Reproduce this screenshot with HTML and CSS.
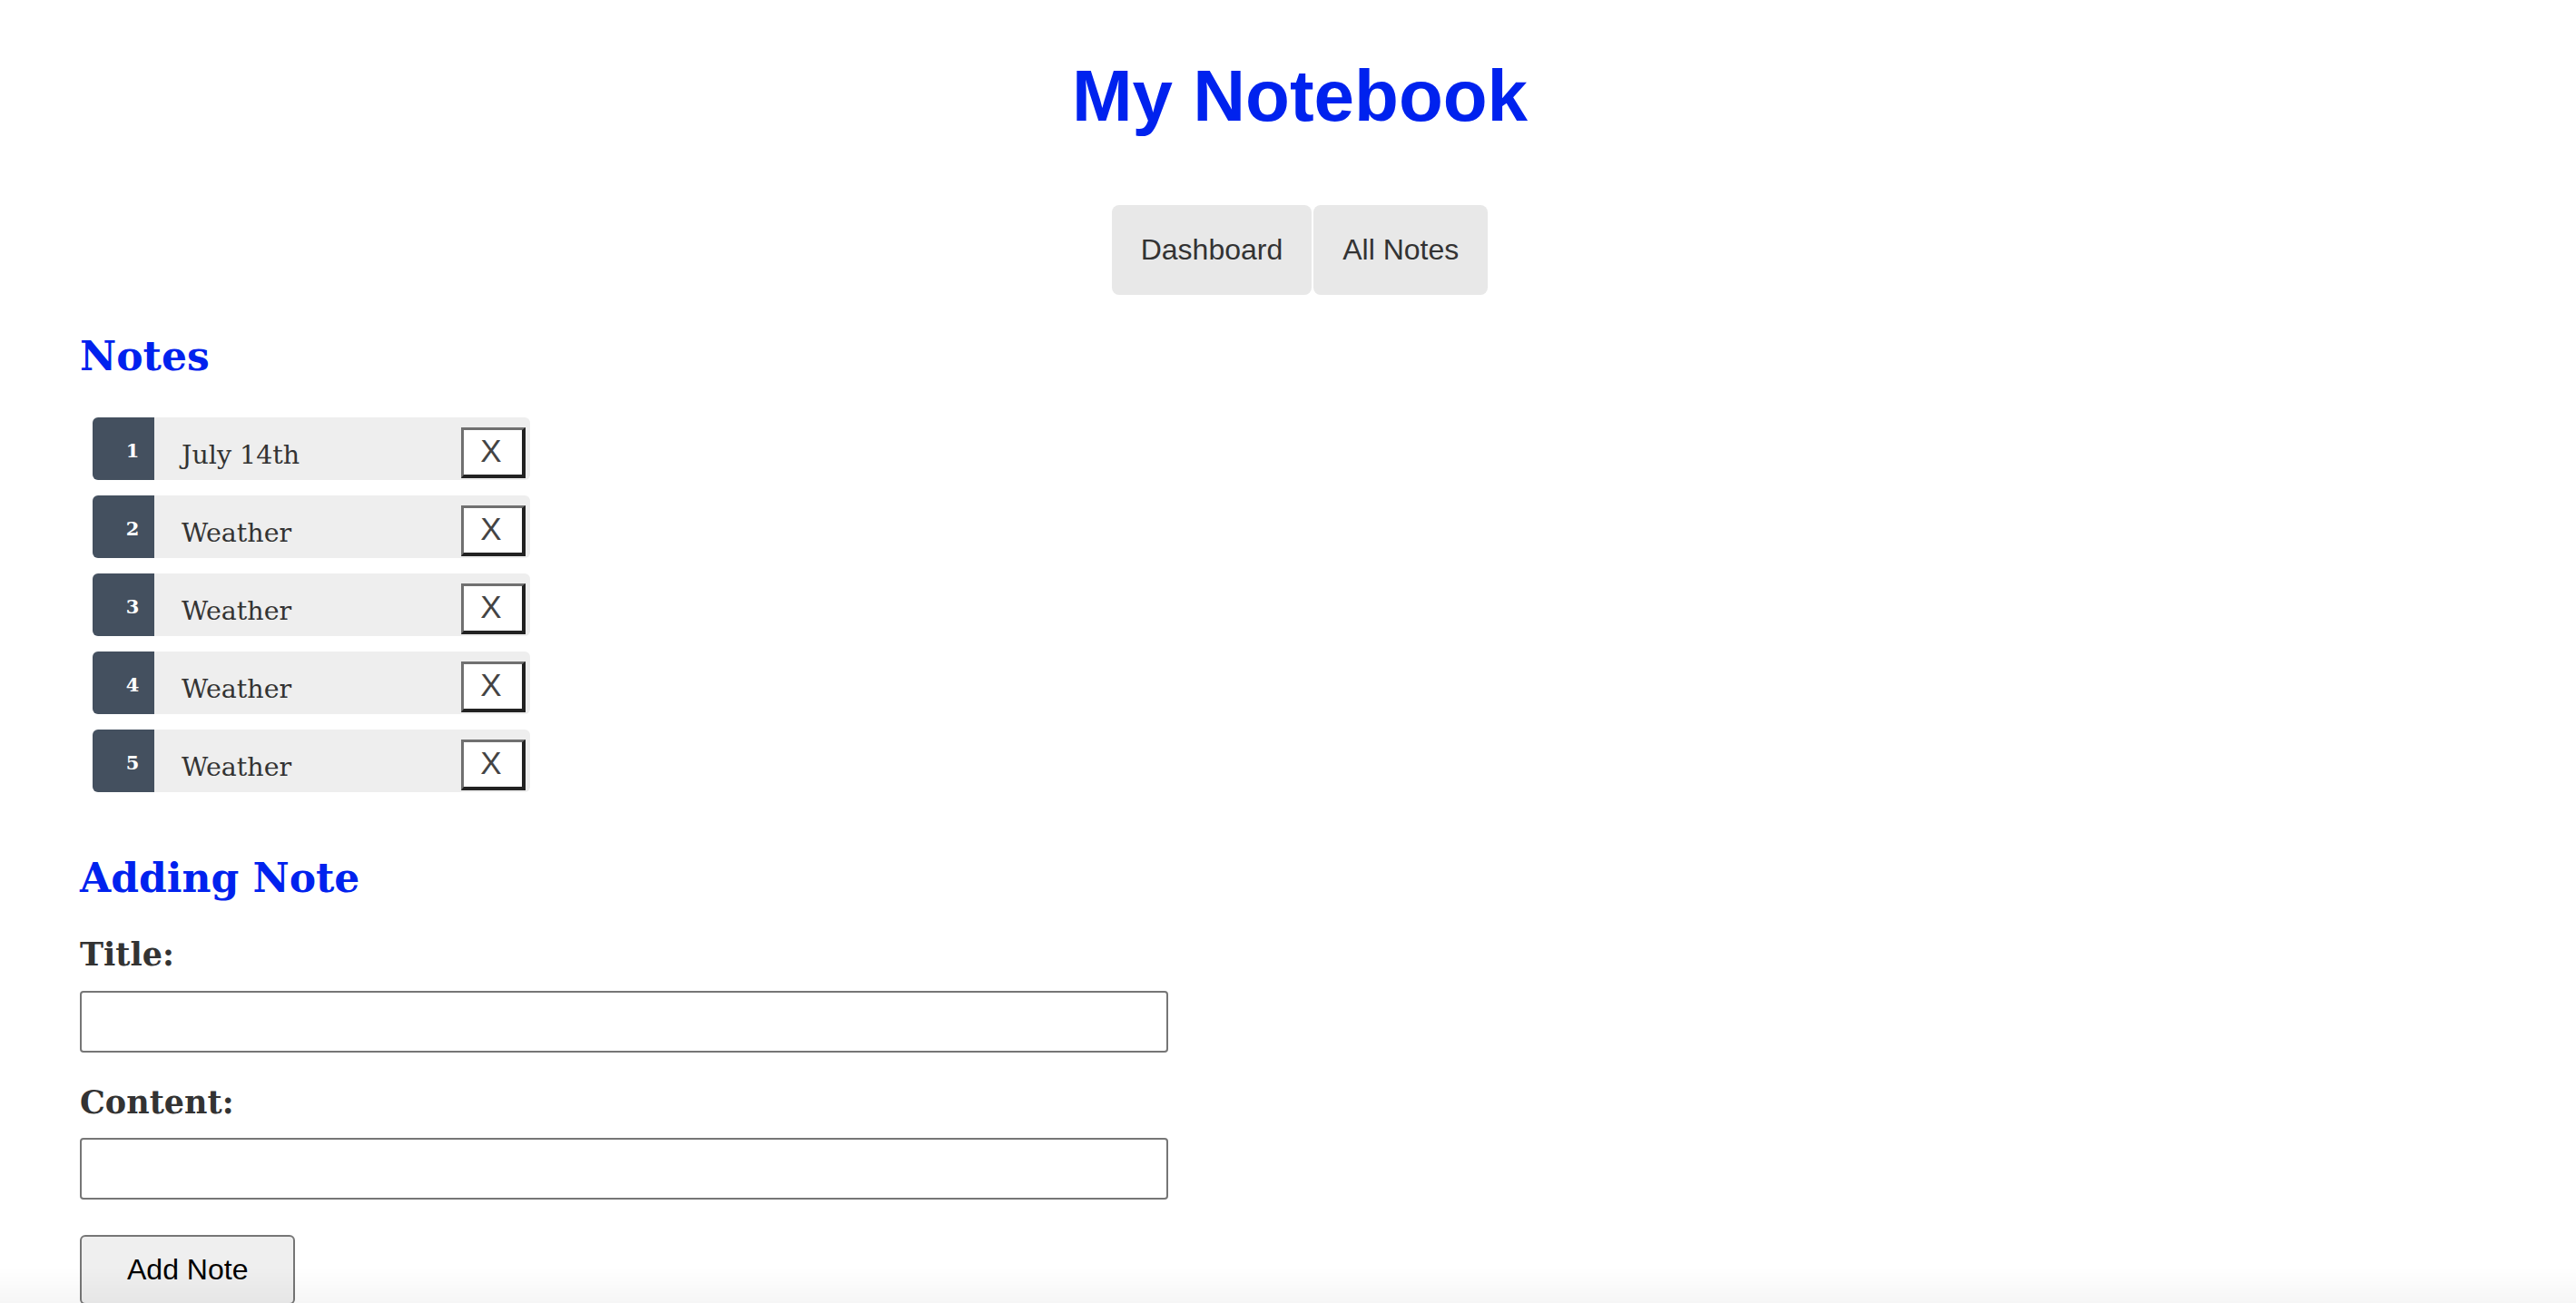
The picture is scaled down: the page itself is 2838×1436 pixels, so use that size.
FILE: index.html
```html
<!DOCTYPE html>
<html lang="en">
<head>
<meta charset="utf-8">
<title>My Notebook</title>
<link rel="stylesheet" href="styles.css">
</head>
<body>
<main class="page">
  <h1 class="app-title">My Notebook</h1>
  <nav class="nav">
    <button class="nav-btn">Dashboard</button>
    <button class="nav-btn">All Notes</button>
  </nav>

  <h2 class="section-title section-notes">Notes</h2>
  <ul class="note-list">
    <li class="note-row"><span class="note-num">1</span><span class="note-title">July 14th</span><button class="note-del">X</button></li>
    <li class="note-row"><span class="note-num">2</span><span class="note-title">Weather</span><button class="note-del">X</button></li>
    <li class="note-row"><span class="note-num">3</span><span class="note-title">Weather</span><button class="note-del">X</button></li>
    <li class="note-row"><span class="note-num">4</span><span class="note-title">Weather</span><button class="note-del">X</button></li>
    <li class="note-row"><span class="note-num">5</span><span class="note-title">Weather</span><button class="note-del">X</button></li>
  </ul>

  <h2 class="section-title section-add">Adding Note</h2>
  <form class="note-form">
    <label class="field-label label-title" for="title">Title:</label>
    <input class="field-input input-title" id="title" type="text">
    <label class="field-label label-content" for="content">Content:</label>
    <input class="field-input input-content" id="content" type="text">
    <button class="add-btn" type="button">Add Note</button>
  </form>
</main>
</body>
</html>
```
FILE: styles.css
```css
html, body {
  margin: 0;
  padding: 0;
  background: #ffffff;
}

body::after {
  content: "";
  position: fixed;
  left: 0;
  right: 0;
  bottom: 0;
  height: 40px;
  background: linear-gradient(to bottom, rgba(0, 0, 0, 0), rgba(0, 0, 0, 0.035));
  pointer-events: none;
}

.page {
  padding: 0 62px 0 88px;
}

.app-title {
  margin: 60px 0 0;
  font: 700 80px/92px "Liberation Sans", Arial, sans-serif;
  color: #0022ee;
  text-align: center;
}

.nav {
  display: flex;
  justify-content: center;
  gap: 2px;
  margin-top: 74px;
}

.nav-btn {
  background: #e8e8e8;
  border: 0;
  border-radius: 8px;
  padding: 31px 32px;
  font: 400 32px/37px "Liberation Sans", Arial, sans-serif;
  color: #333333;
}

.section-title {
  margin: 0;
  font: 700 44px/52px "DejaVu Serif", Georgia, serif;
  color: #0022ee;
}

.section-notes {
  margin-top: 42px;
}

.section-add {
  margin-top: 69px;
}

.note-list {
  list-style: none;
  margin: 41px 0 0 14px;
  padding: 0;
  display: flex;
  flex-direction: column;
  gap: 17px;
}

.note-row {
  display: flex;
  width: 482px;
  height: 69px;
  background: #eeeeee;
  border-radius: 6px;
}

.note-num {
  box-sizing: border-box;
  width: 68px;
  flex: none;
  display: flex;
  align-items: center;
  justify-content: center;
  padding: 4px 0 0 20px;
  background: #44505f;
  border-radius: 6px 0 0 6px;
  color: #ffffff;
  font: 700 21px "DejaVu Serif", Georgia, serif;
}

.note-title {
  flex: 1;
  display: flex;
  align-items: center;
  padding: 14px 0 0 30px;
  font: 400 28.5px "DejaVu Serif", Georgia, serif;
  color: #333333;
}

.note-del {
  box-sizing: border-box;
  align-self: flex-start;
  width: 71px;
  height: 56px;
  margin: 11px 5px 0 0;
  padding: 0 4px 4px 0;
  background: #ffffff;
  border-style: solid;
  border-width: 3px 4px 4px 3px;
  border-color: #707070 #222222 #222222 #707070;
  font: 400 35px/1 "Liberation Sans", Arial, sans-serif;
  color: #444444;
}

.note-form {
  margin: 0;
}

.field-label {
  display: block;
  font: 700 35px/40px "DejaVu Serif", Georgia, serif;
  color: #333333;
}

.label-title {
  margin-top: 38px;
}

.label-content {
  margin-top: 35px;
}

.field-input {
  display: block;
  box-sizing: border-box;
  width: 1199px;
  height: 68px;
  margin: 20px 0 0;
  border: 2px solid #767676;
  border-radius: 4px;
  background: #ffffff;
}

.input-content {
  margin-top: 19px;
}

.add-btn {
  display: block;
  margin-top: 39px;
  padding: 18px 50px;
  background: #efefef;
  border: 2px solid #767676;
  border-radius: 6px;
  font: 400 32px/37px "Liberation Sans", Arial, sans-serif;
  color: #000000;
}
```
